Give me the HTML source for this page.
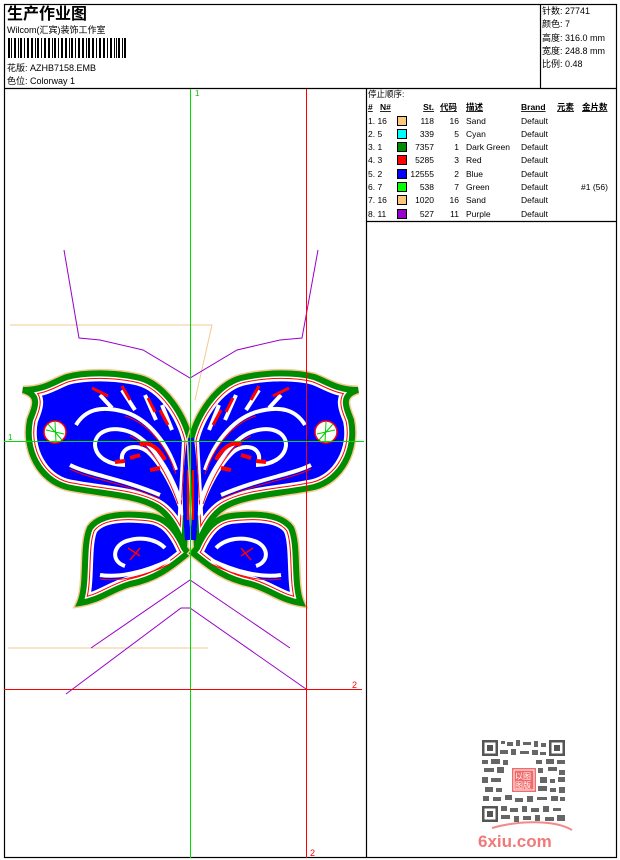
<!DOCTYPE html>
<html><head><meta charset="utf-8"><style>
html,body{margin:0;padding:0;background:#fff}
svg{display:block}
text{font-family:"Liberation Sans","WenQuanYi Zen Hei","Noto Sans CJK SC",sans-serif}
</style></head><body>
<svg width="620" height="860" viewBox="0 0 620 860" xmlns="http://www.w3.org/2000/svg">
<defs>
<path id="uw" d="M190 440 C184 415 165 385 140 378 C115 372 85 372 67 377 C55 381 45 390 23 390 C40 395 36 405 30 420 C24 450 40 480 67 487 C100 494 135 494 157 507 C170 515 178 530 184 548 Z"/>
<path id="lw" d="M184 548 C175 528 165 518 150 516 C125 513 100 514 90 528 C82 545 88 585 80 603 C100 600 110 590 130 584 C160 578 175 563 188 553 Z"/>
<clipPath id="cu"><use href="#uw"/></clipPath>
<clipPath id="cl"><use href="#lw"/></clipPath>
</defs>
<rect width="620" height="860" fill="#fff"/>
<g stroke="#000" stroke-width="1.2" fill="none">
<rect x="4.5" y="4.5" width="612" height="853"/>
<line x1="4.5" y1="88.5" x2="616.5" y2="88.5"/>
<line x1="540.5" y1="4.5" x2="540.5" y2="88.5"/>
<line x1="366.5" y1="88.5" x2="366.5" y2="858"/>
<line x1="366.5" y1="221.5" x2="616.5" y2="221.5"/>
</g>
<text x="7" y="19" font-size="16" font-weight="bold" font-family="'WenQuanYi Zen Hei',sans-serif">生产作业图</text>
<text x="7" y="33" font-size="9">Wilcom(汇宾)装饰工作室</text>
<g fill="#000">
<rect x="8" y="38" width="2" height="20"/><rect x="11" y="38" width="1" height="20"/><rect x="14" y="38" width="2" height="20"/><rect x="18" y="38" width="1" height="20"/><rect x="20" y="38" width="2" height="20"/><rect x="24" y="38" width="1" height="20"/><rect x="27" y="38" width="2" height="20"/><rect x="31" y="38" width="2" height="20"/><rect x="35" y="38" width="1" height="20"/><rect x="37" y="38" width="2" height="20"/><rect x="41" y="38" width="1" height="20"/><rect x="44" y="38" width="2" height="20"/><rect x="48" y="38" width="2" height="20"/><rect x="52" y="38" width="1" height="20"/><rect x="54" y="38" width="2" height="20"/><rect x="58" y="38" width="1" height="20"/><rect x="61" y="38" width="2" height="20"/><rect x="65" y="38" width="2" height="20"/><rect x="69" y="38" width="1" height="20"/><rect x="71" y="38" width="2" height="20"/><rect x="75" y="38" width="1" height="20"/><rect x="78" y="38" width="2" height="20"/><rect x="82" y="38" width="2" height="20"/><rect x="86" y="38" width="1" height="20"/><rect x="88" y="38" width="2" height="20"/><rect x="92" y="38" width="2" height="20"/><rect x="96" y="38" width="1" height="20"/><rect x="99" y="38" width="2" height="20"/><rect x="103" y="38" width="2" height="20"/><rect x="107" y="38" width="1" height="20"/><rect x="110" y="38" width="2" height="20"/><rect x="114" y="38" width="1" height="20"/><rect x="116" y="38" width="1" height="20"/><rect x="118" y="38" width="2" height="20"/><rect x="122" y="38" width="1" height="20"/><rect x="124" y="38" width="2" height="20"/>
</g>
<text x="7" y="71" font-size="9">花版: AZHB7158.EMB</text>
<text x="7" y="84" font-size="9">色位: Colorway 1</text>
<g font-size="9">
<text x="542" y="14">针数: 27741</text>
<text x="542" y="27">颜色: 7</text>
<text x="542" y="41">高度: 316.0 mm</text>
<text x="542" y="54">宽度: 248.8 mm</text>
<text x="542" y="67">比例: 0.48</text>
</g>
<g font-size="8.5">
<text x="368" y="97">停止顺序:</text>
<g font-weight="bold" text-decoration="underline">
<text x="368" y="110">#</text><text x="380" y="110">N#</text><text x="434" y="110" text-anchor="end">St.</text>
<text x="440" y="110">代码</text><text x="466" y="110">描述</text><text x="521" y="110">Brand</text><text x="557" y="110">元素</text><text x="582" y="110">金片数</text>
</g>
<g>
<text x="368" y="124">1. 16</text><rect x="397.5" y="116.5" width="9" height="9" fill="#fcc880" stroke="#000"/><text x="434" y="124" text-anchor="end">118</text><text x="459" y="124" text-anchor="end">16</text><text x="466" y="124">Sand</text><text x="521" y="124">Default</text>
<text x="368" y="137">2. 5</text><rect x="397.5" y="129.5" width="9" height="9" fill="#00ffff" stroke="#000"/><text x="434" y="137" text-anchor="end">339</text><text x="459" y="137" text-anchor="end">5</text><text x="466" y="137">Cyan</text><text x="521" y="137">Default</text>
<text x="368" y="150">3. 1</text><rect x="397.5" y="142.5" width="9" height="9" fill="#008c00" stroke="#000"/><text x="434" y="150" text-anchor="end">7357</text><text x="459" y="150" text-anchor="end">1</text><text x="466" y="150">Dark Green</text><text x="521" y="150">Default</text>
<text x="368" y="163">4. 3</text><rect x="397.5" y="155.5" width="9" height="9" fill="#ff0000" stroke="#000"/><text x="434" y="163" text-anchor="end">5285</text><text x="459" y="163" text-anchor="end">3</text><text x="466" y="163">Red</text><text x="521" y="163">Default</text>
<text x="368" y="177">5. 2</text><rect x="397.5" y="169.5" width="9" height="9" fill="#0000ff" stroke="#000"/><text x="434" y="177" text-anchor="end">12555</text><text x="459" y="177" text-anchor="end">2</text><text x="466" y="177">Blue</text><text x="521" y="177">Default</text>
<text x="368" y="190">6. 7</text><rect x="397.5" y="182.5" width="9" height="9" fill="#00ff00" stroke="#000"/><text x="434" y="190" text-anchor="end">538</text><text x="459" y="190" text-anchor="end">7</text><text x="466" y="190">Green</text><text x="521" y="190">Default</text><text x="581" y="190">#1 (56)</text>
<text x="368" y="203">7. 16</text><rect x="397.5" y="195.5" width="9" height="9" fill="#fcc880" stroke="#000"/><text x="434" y="203" text-anchor="end">1020</text><text x="459" y="203" text-anchor="end">16</text><text x="466" y="203">Sand</text><text x="521" y="203">Default</text>
<text x="368" y="217">8. 11</text><rect x="397.5" y="209.5" width="9" height="9" fill="#9900cc" stroke="#000"/><text x="434" y="217" text-anchor="end">527</text><text x="459" y="217" text-anchor="end">11</text><text x="466" y="217">Purple</text><text x="521" y="217">Default</text>
</g></g>
<g fill="none" stroke="#f5c890" stroke-width="1">
<polyline points="10,325 212,325 195,400"/><line x1="8" y1="648" x2="208" y2="648"/>
</g>
<g fill="none" stroke="#9900cc" stroke-width="1">
<polyline points="64,250 79,338 100,340 143,350 190,378 237,350 280,340 302,338 318,250"/>
<polyline points="91,648 190,580 290,648"/>
<polyline points="66,694 181,608 190,608 306,689"/>
</g>
<g id="L">
<use href="#uw" fill="none" stroke="#f5c890" stroke-width="9"/>
<use href="#lw" fill="none" stroke="#f5c890" stroke-width="9"/>
<use href="#uw" fill="#0000ff"/>
<use href="#lw" fill="#0000ff"/>
<g clip-path="url(#cu)">
<use href="#uw" fill="none" stroke="#fff" stroke-width="16"/>
<use href="#uw" fill="none" stroke="#f00" stroke-width="11"/>
<use href="#uw" fill="none" stroke="#fff" stroke-width="9"/>
</g>
<g clip-path="url(#cl)">
<use href="#lw" fill="none" stroke="#fff" stroke-width="16"/>
<use href="#lw" fill="none" stroke="#f00" stroke-width="11"/>
<use href="#lw" fill="none" stroke="#fff" stroke-width="9"/>
</g>
<use href="#uw" fill="none" stroke="#008c00" stroke-width="6"/>
<use href="#lw" fill="none" stroke="#008c00" stroke-width="6"/>
<g fill="none" stroke="#fff" stroke-width="4">
<path d="M176 470 C168 445 150 420 125 412 C100 405 85 410 76 425"/>
<path d="M180 500 C170 470 150 440 130 432 C110 425 95 432 95 445 C96 458 110 465 125 465"/>
<path d="M183 515 C175 490 162 465 148 452 C135 442 120 448 122 460"/>
<path d="M70 465 C90 475 120 478 160 495"/>
<path d="M100 395 L112 408 M122 390 L135 410 M145 395 L156 420 M162 405 L172 430"/>
<path d="M165 548 C155 538 138 536 124 542 C112 548 112 562 125 566"/>
<path d="M100 575 C120 578 145 572 170 560"/>
<path d="M186 470 L186 530"/>
</g>
<g fill="none" stroke="#f00" stroke-width="1">
<path d="M176 474 C168 449 150 424 125 416"/>
<path d="M178 504 C168 474 150 444 130 436"/>
<path d="M70 469 C90 479 120 482 160 499"/>
<path d="M100 579 C120 582 145 576 170 564"/>
</g>
<path d="M92 388 L108 396 M122 386 L130 400 M148 398 L155 412 M160 410 L168 425" stroke="#f00" stroke-width="3"/>
<path d="M140 445 C150 440 160 450 165 460 M130 458 L140 455 M150 470 L160 468 M115 462 L125 461" stroke="#f00" stroke-width="4" fill="none"/>
<circle cx="55" cy="432" r="11" fill="#fff" stroke="#f00" stroke-width="1.5"/>
<path d="M46 430 L64 434 M55 422 L56 442 M48 424 L62 440" stroke="#0c0" stroke-width="1"/>
<path d="M128 548 L140 556 M140 548 L130 560" stroke="#f00" stroke-width="1.5"/>
<path d="M190 438 C186 470 184 500 188 540" fill="none" stroke="#00f" stroke-width="6"/>
<path d="M188 470 L188 520" stroke="#f00" stroke-width="2"/>
</g>
<use href="#L" transform="translate(381,0) scale(-1,1)"/>
<line x1="190.5" y1="89" x2="190.5" y2="858" stroke="#00e000"/>
<line x1="306.5" y1="89" x2="306.5" y2="858" stroke="#f00"/>
<line x1="4" y1="689.5" x2="362" y2="689.5" stroke="#f00"/>
<line x1="4" y1="441.5" x2="364" y2="441.5" stroke="#00e000"/>
<text x="195" y="96" font-size="8" fill="#00c000">1</text>
<text x="8" y="440" font-size="8" fill="#00c000">1</text>
<text x="352" y="688" font-size="9" fill="#f00">2</text>
<text x="310" y="856" font-size="9" fill="#f00">2</text>
<g fill="#555">
<rect x="482" y="740" width="16" height="16"/><rect x="549" y="740" width="16" height="16"/><rect x="482" y="806" width="16" height="16"/>
</g>
<g fill="#fff"><rect x="484.5" y="742.5" width="11" height="11"/><rect x="551.5" y="742.5" width="11" height="11"/><rect x="484.5" y="808.5" width="11" height="11"/></g>
<g fill="#555"><rect x="487" y="745" width="6" height="6"/><rect x="554" y="745" width="6" height="6"/><rect x="487" y="811" width="6" height="6"/></g>
<g fill="#666">
<rect x="501" y="741" width="4" height="3"/><rect x="507" y="742" width="6" height="4"/><rect x="516" y="740" width="4" height="6"/><rect x="523" y="742" width="8" height="3"/><rect x="534" y="741" width="4" height="6"/><rect x="541" y="743" width="5" height="4"/>
<rect x="500" y="750" width="8" height="4"/><rect x="511" y="749" width="5" height="6"/><rect x="520" y="751" width="9" height="3"/><rect x="532" y="750" width="6" height="5"/><rect x="540" y="752" width="6" height="3"/>
<rect x="482" y="760" width="6" height="4"/><rect x="491" y="759" width="9" height="5"/><rect x="503" y="760" width="5" height="5"/><rect x="536" y="760" width="6" height="4"/><rect x="546" y="759" width="8" height="5"/><rect x="557" y="760" width="8" height="4"/>
<rect x="484" y="768" width="10" height="4"/><rect x="497" y="767" width="7" height="6"/><rect x="538" y="768" width="5" height="5"/><rect x="548" y="767" width="9" height="4"/><rect x="559" y="770" width="6" height="5"/>
<rect x="482" y="777" width="6" height="6"/><rect x="491" y="778" width="10" height="4"/><rect x="540" y="777" width="7" height="6"/><rect x="550" y="779" width="5" height="4"/><rect x="558" y="777" width="7" height="5"/>
<rect x="485" y="787" width="8" height="5"/><rect x="496" y="788" width="6" height="4"/><rect x="505" y="795" width="7" height="5"/><rect x="538" y="786" width="9" height="5"/><rect x="550" y="788" width="6" height="4"/><rect x="559" y="787" width="6" height="6"/>
<rect x="483" y="796" width="6" height="5"/><rect x="493" y="797" width="8" height="4"/><rect x="515" y="798" width="8" height="4"/><rect x="527" y="796" width="6" height="6"/><rect x="537" y="797" width="10" height="3"/><rect x="551" y="796" width="7" height="5"/><rect x="560" y="797" width="5" height="4"/>
<rect x="501" y="806" width="6" height="5"/><rect x="510" y="808" width="8" height="4"/><rect x="522" y="806" width="5" height="6"/><rect x="531" y="808" width="8" height="4"/><rect x="543" y="806" width="6" height="6"/><rect x="553" y="808" width="8" height="3"/>
<rect x="501" y="815" width="9" height="4"/><rect x="514" y="816" width="5" height="6"/><rect x="523" y="816" width="8" height="4"/><rect x="535" y="815" width="5" height="6"/><rect x="545" y="817" width="9" height="4"/><rect x="557" y="815" width="8" height="6"/>
</g>
<rect x="512" y="768" width="24" height="24" fill="#f26a6a"/>
<rect x="514" y="770" width="20" height="20" fill="none" stroke="#fff" stroke-width="1"/>
<text x="515" y="779" font-size="8" fill="#fff">以图</text>
<text x="515" y="788" font-size="8" fill="#fff">图版</text>
<path d="M492 828 C520 820 555 820 572 830" fill="none" stroke="#f28a8a" stroke-width="2"/>
<text x="478" y="847" font-size="17" font-weight="bold" fill="#f07a7a">6xiu.com</text>
</svg>
</body></html>
